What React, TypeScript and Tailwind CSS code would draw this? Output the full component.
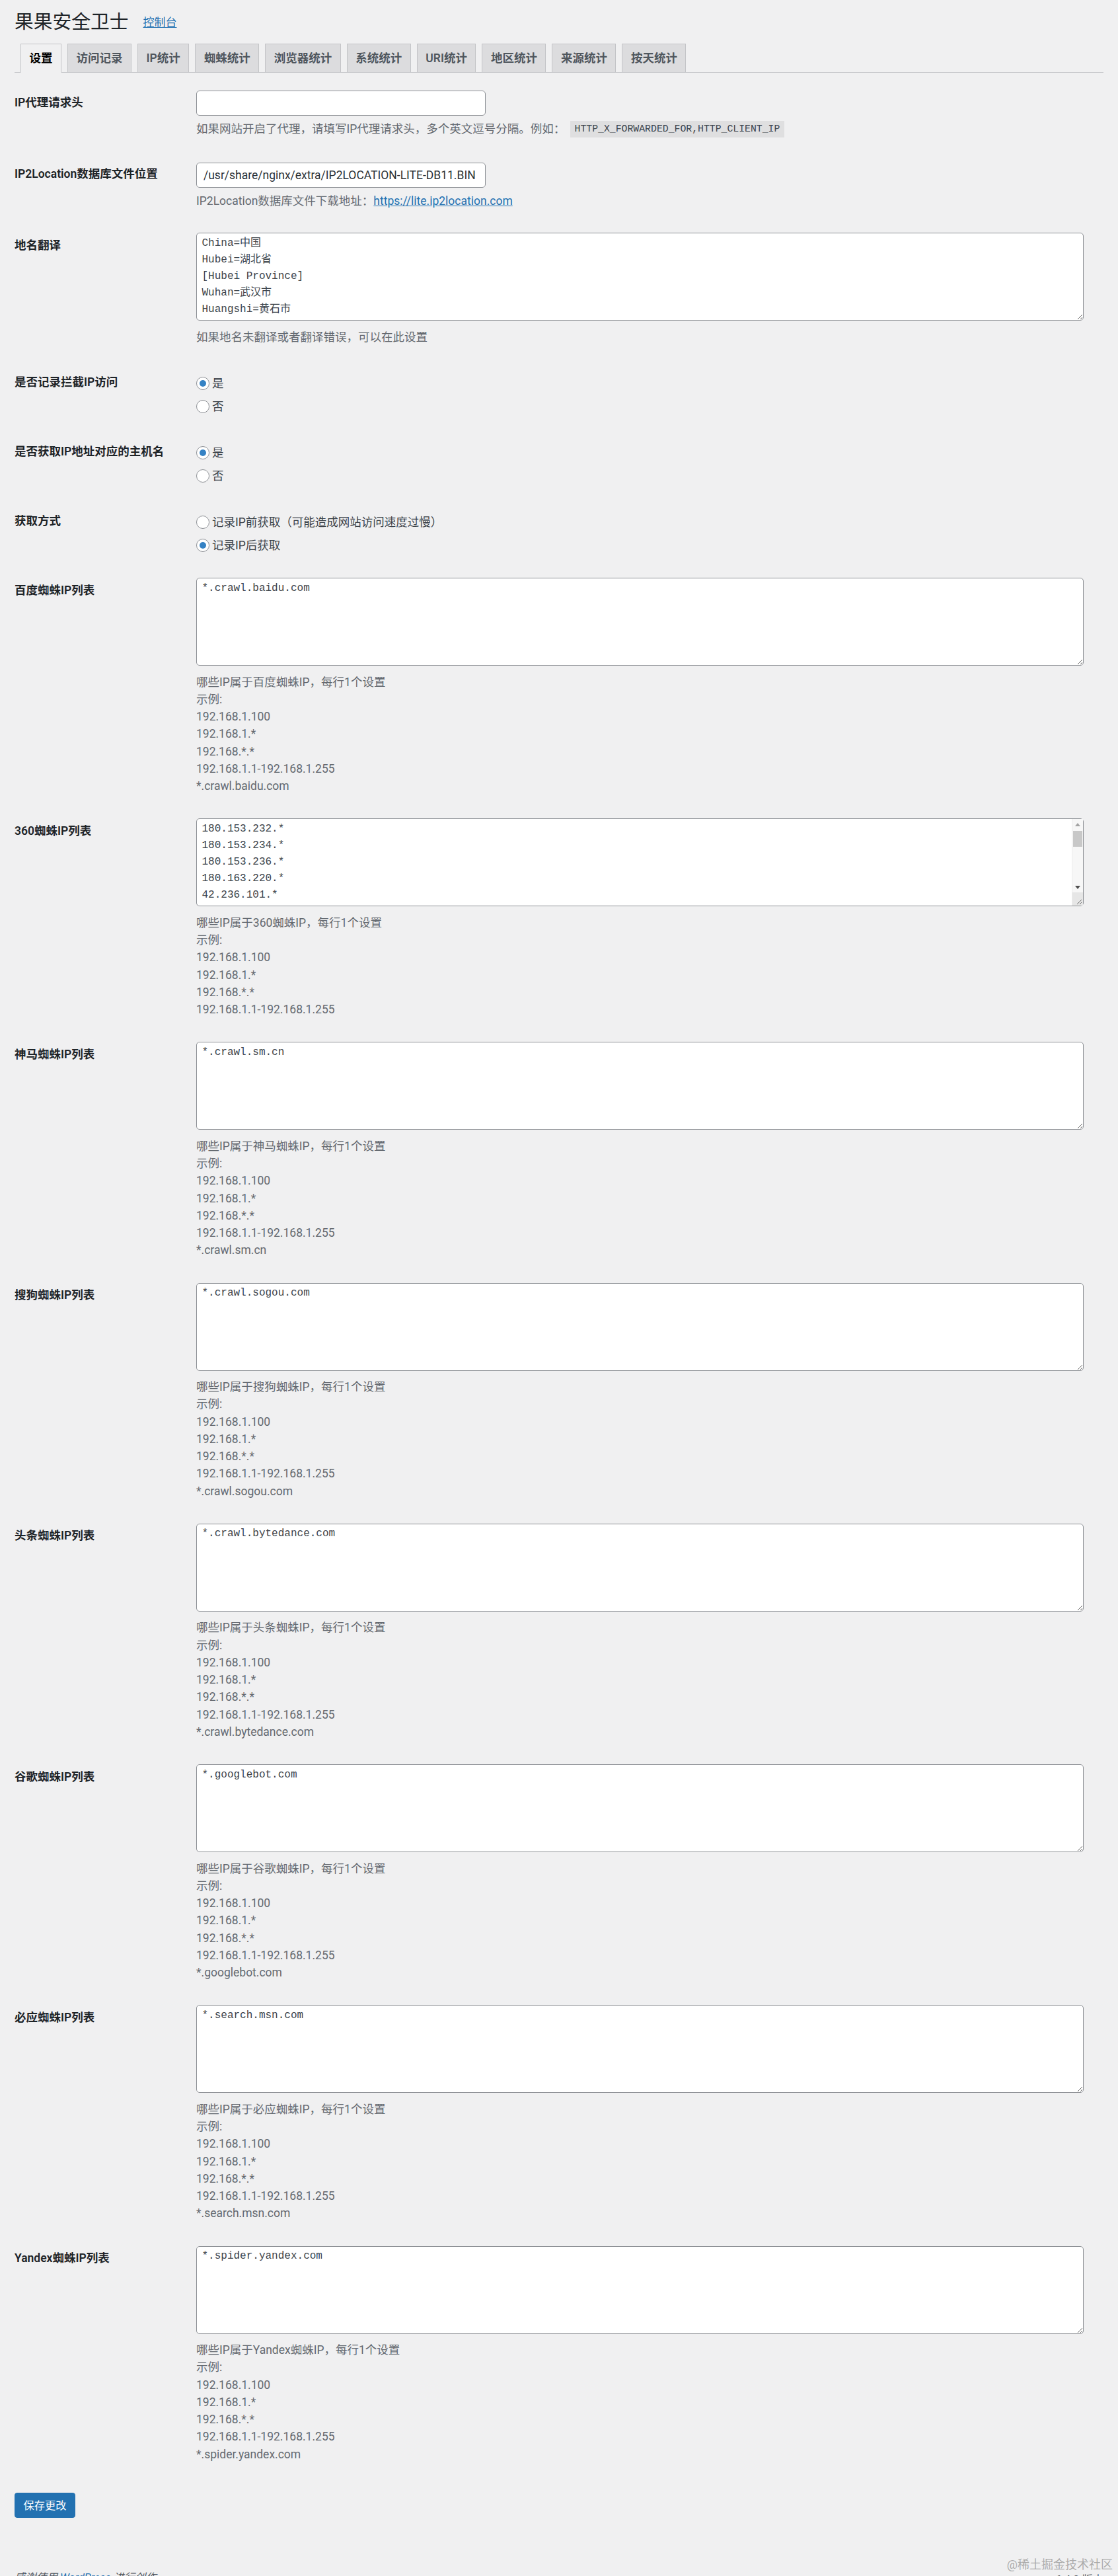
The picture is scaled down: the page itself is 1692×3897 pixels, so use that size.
import React from "react";

const SANS = "font-['Roboto','Noto_Sans_CJK_SC',sans-serif]";
const MONO = "font-['Liberation_Mono','Noto_Sans_CJK_SC',monospace]";

const tabs = ["设置", "访问记录", "IP统计", "蜘蛛统计", "浏览器统计", "系统统计", "URI统计", "地区统计", "来源统计", "按天统计"];

const lines360 = [
  "180.153.232.*",
  "180.153.234.*",
  "180.153.236.*",
  "180.163.220.*",
  "42.236.101.*",
  "42.236.102.*",
  "42.236.103.*",
  "42.236.10.*",
  "42.236.12.*",
  "42.236.13.*",
  "42.236.14.*",
  "42.236.15.*",
  "42.236.16.*",
  "42.236.17.*",
  "42.236.46.*",
  "42.236.48.*",
  "42.236.49.*",
];

function Label({ children }: { children: React.ReactNode }) {
  return (
    <div className="w-[262.5px] shrink-0 pt-[25px] pr-[12.5px] text-[17.5px] leading-[22.75px] font-semibold text-[#1d2327]">
      {children}
    </div>
  );
}

function DescLine({ children }: { children: React.ReactNode }) {
  return (
    <div className="flex h-[26.25px] items-center whitespace-nowrap text-[17.5px] leading-[26.25px] text-[#646970]">
      {children}
    </div>
  );
}

function Radio({ checked, label }: { checked?: boolean; label: string }) {
  return (
    <div className="flex h-[35px] items-center">
      <span className="flex h-[20px] w-[20px] items-center justify-center rounded-full border border-[#8c8f94] bg-white">
        {checked && <span className="h-[10px] w-[10px] rounded-full bg-[#3582c4]" />}
      </span>
      <span className="ml-[4px] text-[17.5px] leading-[24px] text-[#3c434a]">{label}</span>
    </div>
  );
}

function RadioRow({ label, options, checkedIndex }: { label: string; options: string[]; checkedIndex: number }) {
  return (
    <div className="flex h-[105px]">
      <Label>{label}</Label>
      <div className="flex-1 px-[12.5px] pt-[20.5px]">
        {options.map((o, i) => (
          <Radio key={o} label={o} checked={i === checkedIndex} />
        ))}
      </div>
    </div>
  );
}

function FakeScrollbar() {
  return (
    <div className="pointer-events-none absolute right-[1px] top-[1px] bottom-[1px] flex w-[17px] flex-col border-l border-[#ececec] bg-[#f7f7f7]">
      <div className="flex h-[16px] items-center justify-center">
        <svg width="8" height="5" viewBox="0 0 8 5">
          <path d="M0 5 L4 0 L8 5 Z" fill="#a3a3a3" />
        </svg>
      </div>
      <div className="mx-[1px] mt-[2px] h-[24px] bg-[#c8c8c8]" />
      <div className="flex-1" />
      <div className="flex h-[16px] items-center justify-center">
        <svg width="8" height="5" viewBox="0 0 8 5">
          <path d="M0 0 L8 0 L4 5 Z" fill="#505050" />
        </svg>
      </div>
      <div className="relative h-[20px] bg-[#e6e6e6]">
        <svg className="absolute right-[1px] bottom-[1px]" width="10" height="10" viewBox="0 0 10 10">
          <path d="M9 2 L2 9 M9 6 L6 9" stroke="#6b6b6b" strokeWidth="1" />
        </svg>
      </div>
    </div>
  );
}

function TextareaRow({
  label,
  value,
  desc,
  scroll,
}: {
  label: string;
  value: string;
  desc: string[];
  scroll?: boolean;
}) {
  return (
    <div className="flex">
      <Label>{label}</Label>
      <div className="flex-1 px-[12.5px] pt-[17.5px] pb-[18.5px]">
        <div className="relative h-[133px] w-[1343px]">
          <textarea
            defaultValue={value}
            spellCheck={false}
            className={`block h-[133px] w-[1343px] overflow-hidden rounded-[5px] border border-[#8c8f94] bg-white px-[7.5px] py-[2.5px] text-[16px] leading-[25px] text-[#3c434a] outline-none ${MONO} ${
              scroll ? "resize-none" : ""
            }`}
          />
          {scroll && <FakeScrollbar />}
        </div>
        <div className="mt-[11.5px]">
          {desc.map((d, i) => (
            <DescLine key={i}>{d}</DescLine>
          ))}
        </div>
      </div>
    </div>
  );
}

function spiderDesc(name: string, extra?: string) {
  const arr = [
    `哪些IP属于${name}蜘蛛IP，每行1个设置`,
    "示例:",
    "192.168.1.100",
    "192.168.1.*",
    "192.168.*.*",
    "192.168.1.1-192.168.1.255",
  ];
  if (extra) arr.push(extra);
  return arr;
}

const spiders: { label: string; value: string; name: string; extra?: string; scroll?: boolean }[] = [
  { label: "百度蜘蛛IP列表", value: "*.crawl.baidu.com", name: "百度", extra: "*.crawl.baidu.com" },
  { label: "360蜘蛛IP列表", value: lines360.join("\n"), name: "360", scroll: true },
  { label: "神马蜘蛛IP列表", value: "*.crawl.sm.cn", name: "神马", extra: "*.crawl.sm.cn" },
  { label: "搜狗蜘蛛IP列表", value: "*.crawl.sogou.com", name: "搜狗", extra: "*.crawl.sogou.com" },
  { label: "头条蜘蛛IP列表", value: "*.crawl.bytedance.com", name: "头条", extra: "*.crawl.bytedance.com" },
  { label: "谷歌蜘蛛IP列表", value: "*.googlebot.com", name: "谷歌", extra: "*.googlebot.com" },
  { label: "必应蜘蛛IP列表", value: "*.search.msn.com", name: "必应", extra: "*.search.msn.com" },
  { label: "Yandex蜘蛛IP列表", value: "*.spider.yandex.com", name: "Yandex", extra: "*.spider.yandex.com" },
];

export default function App() {
  return (
    <div className={`relative h-[3897px] w-full overflow-hidden bg-[#f0f0f1] ${SANS}`}>
      <div className="pl-[22px] pr-[22px]">
        {/* Title */}
        <div className="mt-[15px] flex h-[37px] items-center">
          <h1 className="text-[28.75px] leading-[37px] font-normal text-[#1d2327]">果果安全卫士</h1>
          <a href="#" className="ml-[22px] text-[17px] leading-[22px] text-[#2271b1] underline">
            控制台
          </a>
        </div>

        {/* Tabs */}
        <div className="mt-[13.5px] flex h-[44.5px] items-end border-b border-[#c3c4c7]">
          {tabs.map((t, i) => (
            <div
              key={t}
              className={`ml-[9px] -mb-px h-[44.5px] border px-[12.5px] py-[6.25px] text-[17.5px] leading-[30px] font-semibold ${
                i === 0
                  ? "border-[#c3c4c7] border-b-[#f0f0f1] bg-[#f0f0f1] text-black"
                  : "border-[#c3c4c7] bg-[#dcdcde] text-[#50575e]"
              }`}
            >
              {t}
            </div>
          ))}
        </div>

        {/* Form table */}
        <div className="mt-[8.5px]">
          {/* IP proxy header */}
          <div className="flex h-[108.75px]">
            <Label>IP代理请求头</Label>
            <div className="flex-1 px-[12.5px] pt-[18.75px]">
              <input
                type="text"
                defaultValue=""
                className="block h-[37.5px] w-[437.5px] rounded-[5px] border border-[#8c8f94] bg-white px-[10px] text-[17.5px] text-[#2c3338] outline-none"
              />
              <div className="mt-[7.5px]">
                <DescLine>
                  如果网站开启了代理，请填写IP代理请求头，多个英文逗号分隔。例如：
                  <code
                    className={`ml-[8px] flex h-[25px] items-center bg-[rgba(0,0,0,0.07)] px-[6.25px] text-[14.8px] leading-[25px] text-[#3c434a] ${MONO}`}
                  >
                    HTTP_X_FORWARDED_FOR,HTTP_CLIENT_IP
                  </code>
                </DescLine>
              </div>
            </div>
          </div>

          {/* IP2Location */}
          <div className="flex h-[107.5px]">
            <Label>IP2Location数据库文件位置</Label>
            <div className="flex-1 px-[12.5px] pt-[18.75px]">
              <input
                type="text"
                defaultValue="/usr/share/nginx/extra/IP2LOCATION-LITE-DB11.BIN"
                className="block h-[37.5px] w-[437.5px] rounded-[5px] border border-[#8c8f94] bg-white px-[10px] text-[17.5px] text-[#2c3338] outline-none"
              />
              <div className="mt-[7px]">
                <DescLine>
                  IP2Location数据库文件下载地址：
                  <a href="#" className="text-[#2271b1] underline">
                    https://lite.ip2location.com
                  </a>
                </DescLine>
              </div>
            </div>
          </div>

          {/* Place name translation */}
          <TextareaRow
            label="地名翻译"
            value={"China=中国\nHubei=湖北省\n[Hubei Province]\nWuhan=武汉市\nHuangshi=黄石市"}
            desc={["如果地名未翻译或者翻译错误，可以在此设置"]}
          />

          <RadioRow label="是否记录拦截IP访问" options={["是", "否"]} checkedIndex={0} />
          <RadioRow label="是否获取IP地址对应的主机名" options={["是", "否"]} checkedIndex={0} />
          <RadioRow label="获取方式" options={["记录IP前获取（可能造成网站访问速度过慢）", "记录IP后获取"]} checkedIndex={1} />

          {spiders.map((s) => (
            <TextareaRow key={s.label} label={s.label} value={s.value} desc={spiderDesc(s.name, s.extra)} scroll={s.scroll} />
          ))}
        </div>

        {/* Submit */}
        <div className="mt-[27px]">
          <button className="h-[37.5px] rounded-[3.75px] border border-[#2271b1] bg-[#2271b1] px-[12.5px] text-[16.25px] leading-[35px] text-white">
            保存更改
          </button>
        </div>

        {/* Footer */}
        <div className="mt-[78px] flex justify-between text-[16.25px] leading-[25px] text-[#50575e]">
          <span className="italic">
            感谢使用 <a href="#" className="text-[#2271b1]">WordPress</a> 进行创作。
          </span>
          <span className="pt-[3px]">6.4.2 版本</span>
        </div>
      </div>

      {/* Watermark */}
      <div className="pointer-events-none absolute right-[8px] top-[3868px] text-[18px] leading-[24px] text-[rgba(140,140,140,0.7)]">
        @稀土掘金技术社区
      </div>
    </div>
  );
}
